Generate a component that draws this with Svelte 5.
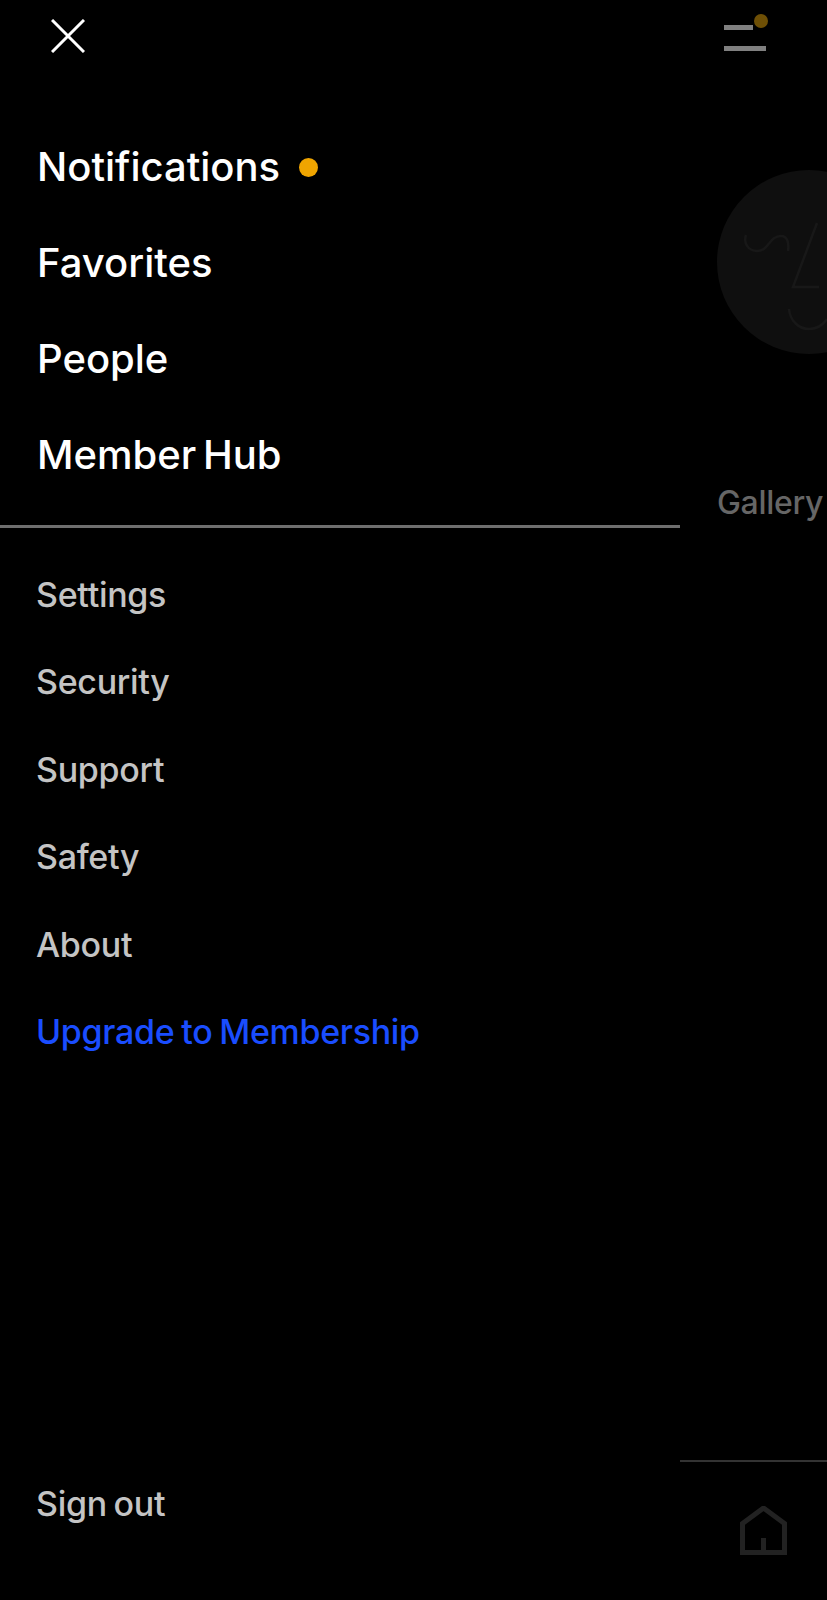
<script>
  const primary = ['Favorites', 'People', 'Member Hub'];
  const secondary = ['Settings', 'Security', 'Support', 'Safety', 'About'];
</script>

<div class="screen">
  <nav class="drawer">
    <div class="top">
      <svg class="close" width="34" height="34" viewBox="0 0 34 34" aria-label="Close">
        <path d="M1 1 33 33M33 1 1 33" stroke="#fff" stroke-width="3" fill="none" />
      </svg>
    </div>
    <ul class="primary">
      <li>Notifications<span class="dot"></span></li>
      {#each primary as item}
        <li>{item}</li>
      {/each}
    </ul>
    <ul class="secondary">
      {#each secondary as item}
        <li>{item}</li>
      {/each}
      <li class="upgrade">Upgrade to Membership</li>
    </ul>
    <div class="signout">Sign out</div>
  </nav>

  <aside class="behind">
    <div class="menu">
      <span class="bar short"></span>
      <span class="bar"></span>
      <span class="menu-dot"></span>
    </div>
    <svg class="avatar" width="110" height="184" viewBox="0 0 110 184">
      <circle cx="92" cy="92" r="92" fill="#0f0f0f" />
      <g fill="none" stroke="#181818" stroke-width="2.5">
        <path d="M29 65c-3 9 3 16 11 16 12 0 12-15 24-15 7 0 8 8 7 15" />
        <path d="M100 53 76 117h26" />
        <path d="M72 139c1 12 10 20 20 20 8 0 14-4 18-10" />
      </g>
    </svg>
    <div class="gallery">Gallery</div>
    <div class="tabbar">
      <svg width="47" height="49" viewBox="0 0 47 49">
        <path d="M2.5 46.5V17.5L23.5 2 44.5 17.5v29ZM23.5 46.5V32" fill="none" stroke="#222" stroke-width="5" />
      </svg>
    </div>
  </aside>
</div>

<style>
  :global(body) {
    margin: 0;
    background: #000;
  }
  .screen {
    display: flex;
    width: 827px;
    height: 1600px;
    overflow: hidden;
    background: #000;
    font-family: Inter, "Liberation Sans", Arial, sans-serif;
  }
  .drawer {
    width: 680px;
    flex: none;
    display: flex;
    flex-direction: column;
    height: 1600px;
  }
  .top {
    height: 119px;
    padding: 19px 0 0 51px;
    box-sizing: border-box;
  }
  .close {
    display: block;
  }
  ul {
    list-style: none;
    margin: 0;
  }
  .primary {
    padding: 0 0 0 37px;
    height: 406px;
    border-bottom: 3px solid #6e6e6e;
  }
  .primary li {
    height: 96px;
    line-height: 96px;
    font-size: 40px;
    font-weight: 500;
    word-spacing: -4px;
    color: #fff;
    display: flex;
    align-items: center;
  }
  .dot {
    width: 19px;
    height: 19px;
    border-radius: 50%;
    background: #f0a500;
    margin-left: 19px;
  }
  .secondary {
    padding: 23px 0 0 36px;
    flex: 1;
  }
  .secondary li {
    height: 87.4px;
    line-height: 87.4px;
    font-size: 34px;
    font-weight: 450;
    letter-spacing: -0.3px;
    word-spacing: -2px;
    color: #c4c4c4;
  }
  .secondary .upgrade {
    color: #1a4dff;
  }
  .signout {
    padding-left: 36px;
    height: 87px;
    line-height: 87px;
    margin-bottom: 53px;
    font-size: 34px;
    font-weight: 450;
    letter-spacing: -0.3px;
    word-spacing: -2px;
    color: #c4c4c4;
  }
  .behind {
    flex: 1;
    min-width: 0;
    display: flex;
    flex-direction: column;
  }
  .menu {
    position: relative;
    height: 170px;
    margin-left: 44px;
    padding-top: 25px;
    box-sizing: border-box;
  }
  .bar {
    display: block;
    width: 42px;
    height: 5px;
    background: #808080;
    margin-bottom: 16px;
  }
  .bar.short {
    width: 29px;
  }
  .menu-dot {
    position: absolute;
    left: 30px;
    top: 14px;
    width: 14px;
    height: 14px;
    border-radius: 50%;
    background: #6e4f05;
  }
  .avatar {
    display: block;
    margin-left: 37px;
    flex: none;
  }
  .gallery {
    margin: 127px 0 0 37px;
    height: 44px;
    line-height: 44px;
    font-size: 32px;
    font-weight: 450;
    letter-spacing: -0.3px;
    color: #666;
    white-space: nowrap;
  }
  .tabbar {
    margin-top: auto;
    height: 140px;
    border-top: 2px solid #333;
    padding: 44px 0 0 60px;
    box-sizing: border-box;
  }
  .tabbar svg {
    display: block;
  }
</style>
